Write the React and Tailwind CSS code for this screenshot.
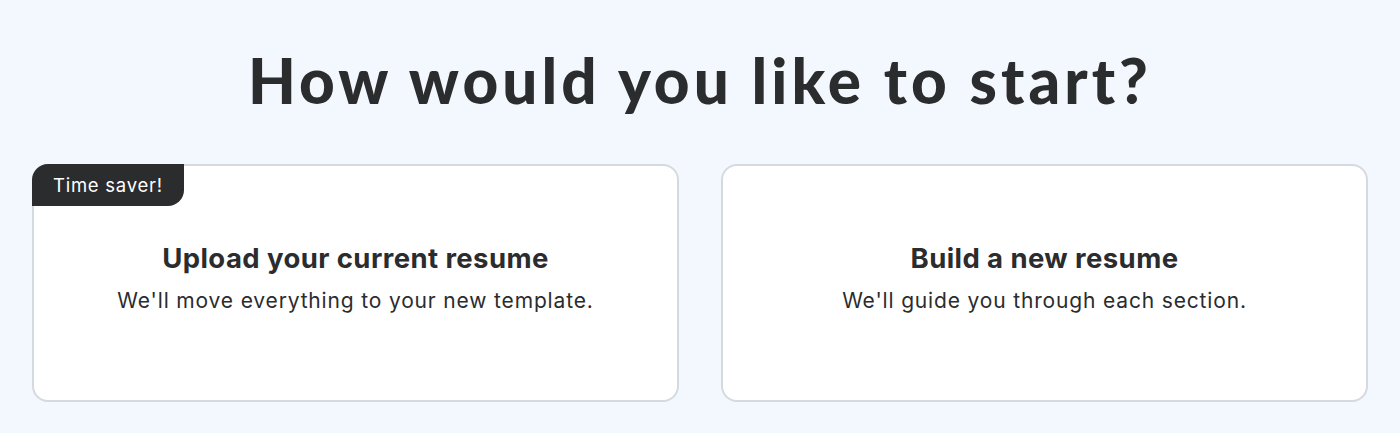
export default function App() {
  const cards = [
    { title: 'Upload your current resume', sub: "We'll move everything to your new template.", badge: 'Time saver!' },
    { title: 'Build a new resume', sub: "We'll guide you through each section." },
  ]

  return (
    <div className="min-h-[433px] bg-[#f3f7fe] px-8 pt-[44px] pb-8 text-[#2b2c2e]">
      <h1 className="text-center font-['Lato',sans-serif] text-[62px] font-black leading-[72px] tracking-[0.065em]">
        How would you like to start?
      </h1>

      <div className="mt-[48px] grid grid-cols-2 gap-[42px]">
        {cards.map((card) => (
          <button
            key={card.title}
            className="relative flex h-[238px] flex-col items-center justify-center rounded-2xl border-2 border-[#d5dae1] bg-white pb-[10px] font-['Inter',sans-serif]"
          >
            {card.badge && (
              <span className="absolute -left-[2px] -top-[2px] rounded-tl-2xl rounded-br-2xl bg-[#2b2c2e] px-[21px] py-[8px] text-[18.5px] leading-[26px] tracking-[0.04em] text-white">
                {card.badge}
              </span>
            )}
            <span className="text-[27.5px] font-bold leading-[36px] tracking-[0.015em]">{card.title}</span>
            <span className="mt-[10px] text-[21px] leading-[30px] tracking-[0.04em]">{card.sub}</span>
          </button>
        ))}
      </div>
    </div>
  )
}
